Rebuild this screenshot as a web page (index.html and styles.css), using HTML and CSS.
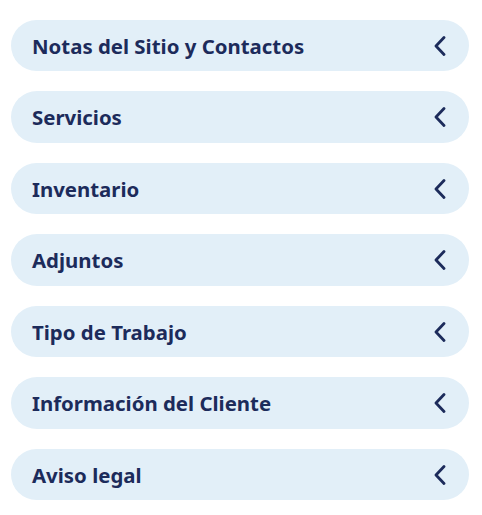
FILE: index.html
```html
<!DOCTYPE html>
<html lang="es">
<head>
<meta charset="utf-8">
<title>Secciones</title>
<link rel="stylesheet" href="styles.css">
</head>
<body>
<div class="list">
  <div class="item"><span class="label">Notas del Sitio y Contactos</span><svg class="chev" viewBox="0 0 12 20" aria-hidden="true"><path d="M10 1.5 L2 10 L10 18.5"/></svg></div>
  <div class="item"><span class="label">Servicios</span><svg class="chev" viewBox="0 0 12 20" aria-hidden="true"><path d="M10 1.5 L2 10 L10 18.5"/></svg></div>
  <div class="item"><span class="label">Inventario</span><svg class="chev" viewBox="0 0 12 20" aria-hidden="true"><path d="M10 1.5 L2 10 L10 18.5"/></svg></div>
  <div class="item"><span class="label">Adjuntos</span><svg class="chev" viewBox="0 0 12 20" aria-hidden="true"><path d="M10 1.5 L2 10 L10 18.5"/></svg></div>
  <div class="item"><span class="label">Tipo de Trabajo</span><svg class="chev" viewBox="0 0 12 20" aria-hidden="true"><path d="M10 1.5 L2 10 L10 18.5"/></svg></div>
  <div class="item"><span class="label">Información del Cliente</span><svg class="chev" viewBox="0 0 12 20" aria-hidden="true"><path d="M10 1.5 L2 10 L10 18.5"/></svg></div>
  <div class="item"><span class="label">Aviso legal</span><svg class="chev" viewBox="0 0 12 20" aria-hidden="true"><path d="M10 1.5 L2 10 L10 18.5"/></svg></div>
</div>
</body>
</html>
```
FILE: styles.css
```css
html, body {
  margin: 0;
  padding: 0;
  background: #ffffff;
}
body {
  font-family: "Noto Sans", "Open Sans", sans-serif;
}
.list {
  display: flex;
  flex-direction: column;
  gap: 20px;
  padding: 19.5px 13px 0 11px;
}
.item {
  height: 51.5px;
  box-sizing: border-box;
  background: #e2eff8;
  border-radius: 26px;
  display: flex;
  align-items: center;
  justify-content: space-between;
  padding: 1px 23px 0 21px;
}
.label {
  font-size: 20.4px;
  font-weight: 700;
  color: #1c2b5b;
}
.chev {
  width: 12px;
  height: 20px;
  fill: none;
  stroke: #1c2b5b;
  stroke-width: 2.8;
  stroke-linecap: round;
  stroke-linejoin: round;
}
```
